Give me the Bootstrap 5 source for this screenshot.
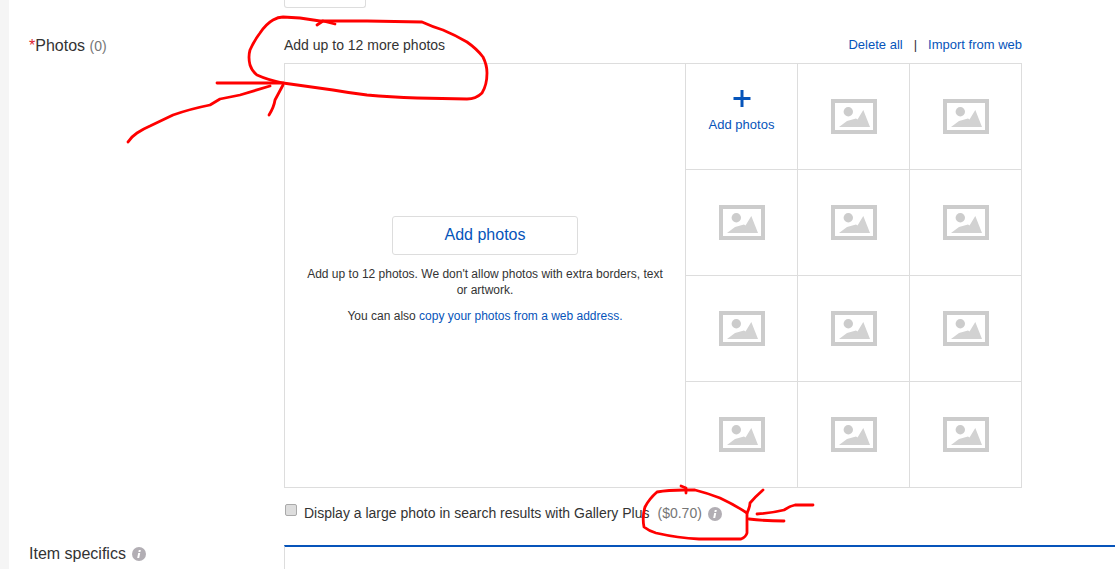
<!DOCTYPE html>
<html lang="en">
<head>
<meta charset="utf-8">
<title>Photos</title>
<link href="https://cdn.jsdelivr.net/npm/bootstrap@5.3.0/dist/css/bootstrap.min.css" rel="stylesheet">
<style>
html,body{height:569px;overflow:hidden}
body{font-family:"Liberation Sans",Arial,sans-serif;color:#333;font-size:13px;background:#fff;position:relative}
a{color:#0654ba;text-decoration:none}
.pg-strip{width:9px;background:#f5f5f5;flex:none}
.pg-main{padding-left:20px;min-width:0}
.pg-label{width:255px;flex:none;font-size:16px;line-height:18px}
.pg-label-photos{padding-top:1px}
.pg-label-spec{height:18px}
.pg-muted{color:#767676;font-size:14px}
.pg-star{color:#dd1e31}
.pg-stub{width:82px;height:8px;border:1px solid #ddd;border-top:0;border-radius:0 0 3px 3px;margin-left:255px}
.pg-photos-row{margin-top:28px}
.pg-photos-col{width:738px;flex:none}
.pg-head{height:27px;line-height:16px;padding-top:1px}
.pg-lead-text{font-size:14px}
.pg-sep{margin:0 11px;color:#333}
.pg-grid{display:grid;grid-template-columns:401px repeat(3,112px);grid-template-rows:repeat(4,106px);border-top:1px solid #ddd;border-left:1px solid #ddd}
.pg-cell{border-right:1px solid #ddd;border-bottom:1px solid #ddd}
.pg-big{grid-row:1 / span 4;font-size:12px;line-height:16px;padding-top:152px}
.pg-big p{width:360px}
.pg-big .pg-note{margin-bottom:10px}
.pg-addbtn{width:186px;height:39px;padding:0 0 2px;font-size:16px;line-height:35px;color:#0654ba;border:1px solid #ddd;border-radius:3px;background:#fff;margin-bottom:11px}
.pg-addbtn:hover{color:#0654ba;border-color:#ddd}
.pg-add{padding-top:21px;line-height:16px;color:#0654ba}
.pg-plus{display:block}
.pg-gallery{padding-top:17px;height:57px;line-height:17px;font-size:14px}
.pg-check{width:12px;height:12px;margin:-1px 7px 0 1px;background:#ddd;border:1px solid #aaa;border-radius:2px;flex:none;appearance:none}
.pg-info{width:14px;height:14px;flex:none;display:block;margin:2px 0 0 6px}
.pg-specifics{border-top:2px solid #0654ba;border-left:1px solid #ddd;height:40px}
.pg-ink{position:absolute;left:0;top:0;pointer-events:none}
</style>
</head>
<body class="m-0">
<div class="d-flex h-100">
  <div class="pg-strip"></div>
  <div class="pg-main flex-grow-1">
    <div class="pg-stub"></div>
    <div class="d-flex pg-photos-row">
      <div class="pg-label pg-label-photos"><span class="pg-star">*</span>Photos <span class="pg-muted">(0)</span></div>
      <div class="pg-photos-col">
        <div class="d-flex justify-content-between pg-head">
          <span class="pg-lead-text">Add up to 12 more photos</span>
          <span><a href="#">Delete all</a><span class="pg-sep">|</span><a href="#">Import from web</a></span>
        </div>
        <div class="pg-grid">
          <div class="pg-cell pg-big d-flex flex-column align-items-center text-center">
            <button type="button" class="btn pg-addbtn">Add photos</button>
            <p class="pg-note">Add up to 12 photos. We don't allow photos with extra borders, text or artwork.</p>
            <p class="mb-0">You can also <a href="#">copy your photos from a web address.</a></p>
          </div>
          <div class="pg-cell pg-add text-center">
            <svg class="pg-plus mx-auto" width="20" height="32" viewBox="0 0 20 32"><path d="M10 5v17M1.500 13.500h17" stroke="#0654ba" stroke-width="3" fill="none"/></svg>
            <a href="#">Add photos</a>
          </div>
          <script>
            var ph='<svg width="46" height="35" viewBox="0 0 46 35"><rect x="2" y="2" width="42" height="31" fill="#fff" stroke="#ccc" stroke-width="4"/><circle cx="17.300" cy="12.700" r="4.700" fill="#ccc"/><path d="M8 28l8-6 9-2.500 1.500 1L32.300 11 39 28z" fill="#d2d2d2"/></svg>';
            for(var i=0;i<11;i++){document.write('<div class="pg-cell d-flex align-items-center justify-content-center">'+ph+'</div>');}
          </script>
        </div>
        <div class="d-flex align-items-start pg-gallery">
          <input type="checkbox" class="pg-check" aria-label="Gallery Plus">
          <span>Display a large photo in search results with Gallery Plus</span>
          <span class="pg-muted ms-2">($0.70)</span>
          <svg class="pg-info" viewBox="0 0 14 14"><circle cx="7" cy="7" r="7" fill="#b2aeb4"/><path d="M6.200 6h2l-1 5h-2zM6.800 3h2l-.4 2h-2z" fill="#fff"/></svg>
        </div>
      </div>
    </div>
    <div class="d-flex align-items-start">
      <div class="pg-label pg-label-spec d-flex align-items-center">Item specifics<svg class="pg-info mt-0" viewBox="0 0 14 14"><circle cx="7" cy="7" r="7" fill="#b2aeb4"/><path d="M6.200 6h2l-1 5h-2zM6.800 3h2l-.4 2h-2z" fill="#fff"/></svg></div>
      <div class="pg-specifics flex-grow-1"></div>
    </div>
  </div>
</div>
<svg class="pg-ink" width="1115" height="569" viewBox="0 0 1115 569" fill="none" stroke="#f00" stroke-width="2.800" stroke-linecap="round" stroke-linejoin="round">
  <path d="M283 83Q268 80 257 75Q252 71 250 65Q248 57 250 50Q254 41 260 33Q266 24 273 20Q278 17 283 17L300 18 320 21H367L422 22Q433 27 443 30Q455 35 467 42Q477 49 483 57Q487 65 487 73Q487 85 482 93Q476 99 467 99L417 98Q390 97 367 95Q350 93 333 90Z"/>
  <path d="M317 25L323 21 335 24"/>
  <path d="M217 83H283"/>
  <path d="M128 142Q131 137 137 133Q143 129 150 126L173 115Q190 109 210 105L220 99 240 95 270 86"/>
  <path d="M283 85L275 100Q274 107 269 115"/>
  <path d="M684 490Q668 490 657 492Q649 499 645 507Q642 517 644 527Q649 531 656 533Q678 538 699 539L741 539Q746 537 747 533V513Q735 505 720 498Q707 493 695 490Z"/>
  <path d="M681 486L686 488 686 493"/>
  <path d="M747 513Q750 507 750 503Q755 497 763 490"/>
  <path d="M757 514Q772 513 784 510Q790 506 795 505H813"/>
  <path d="M749 519Q765 521 784 521"/>
</svg>
<script src="https://cdn.jsdelivr.net/npm/bootstrap@5.3.0/dist/js/bootstrap.bundle.min.js"></script>
</body>
</html>
